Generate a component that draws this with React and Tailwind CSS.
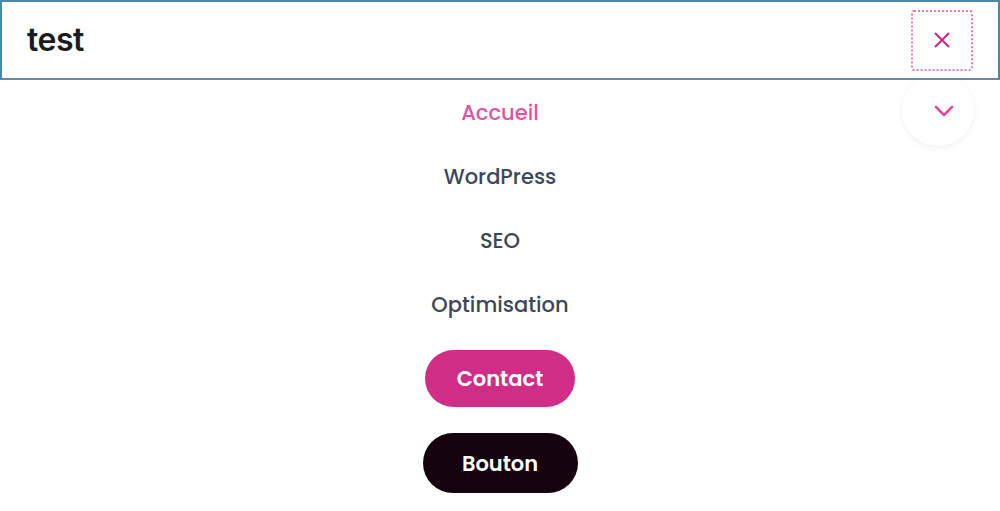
export default function App() {
  const font = { fontFamily: "Poppins, Inter, 'Noto Sans', sans-serif" };
  return (
    <div className="relative w-[1000px] h-[511px] bg-white overflow-hidden" style={font}>
      <div className="relative z-10 h-[80px] border-2 border-[#4b86ab] border-b-[#6a87a3] bg-white flex items-center pl-[25px] pr-[25px]">
        <span className="text-[32px] text-[#1c1c1c] font-semibold tracking-[-0.5px]" style={{ fontFamily: "Inter, sans-serif" }}>test</span>
        <div className="ml-auto w-[62px] h-[61px] border-2 border-dotted border-[#e27bb4] rounded-[3px] flex items-center justify-center">
          <svg width="18" height="18" viewBox="0 0 18 18" fill="none" stroke="#c9287f" strokeWidth="2">
            <path d="M2 2 L16 16 M16 2 L2 16" />
          </svg>
        </div>
      </div>
      <div className="absolute left-[902px] top-[74px] w-[72px] h-[72px] rounded-full bg-white shadow-[0_2px_6px_rgba(0,0,0,0.06)] flex items-end justify-center pb-[28px] pl-[12px]">
        <svg width="22" height="13" viewBox="0 0 22 13" fill="none" stroke="#d94a96" strokeWidth="2.5" strokeLinecap="round" strokeLinejoin="round">
          <path d="M3 2 L11 10 L19 2" />
        </svg>
      </div>
      <nav className="flex flex-col items-center pt-[17px]">
        <a className="h-[32px] leading-[32px] text-[21px] font-medium text-[#e0559f]">Accueil</a>
        <a className="mt-[32px] h-[32px] leading-[32px] text-[21px] font-medium text-[#3c4757]">WordPress</a>
        <a className="mt-[32px] h-[32px] leading-[32px] text-[21px] font-medium text-[#3c4757]">SEO</a>
        <a className="mt-[32px] h-[32px] leading-[32px] text-[21px] font-medium text-[#3c4757]">Optimisation</a>
        <a className="mt-[29px] w-[150px] h-[57px] rounded-full bg-[#cf2e86] text-white text-[21px] font-semibold flex items-center justify-center">Contact</a>
        <a className="mt-[26px] w-[155px] h-[60px] rounded-full bg-[#15040f] text-white text-[21px] font-semibold flex items-center justify-center pt-[1px]">Bouton</a>
      </nav>
    </div>
  );
}
